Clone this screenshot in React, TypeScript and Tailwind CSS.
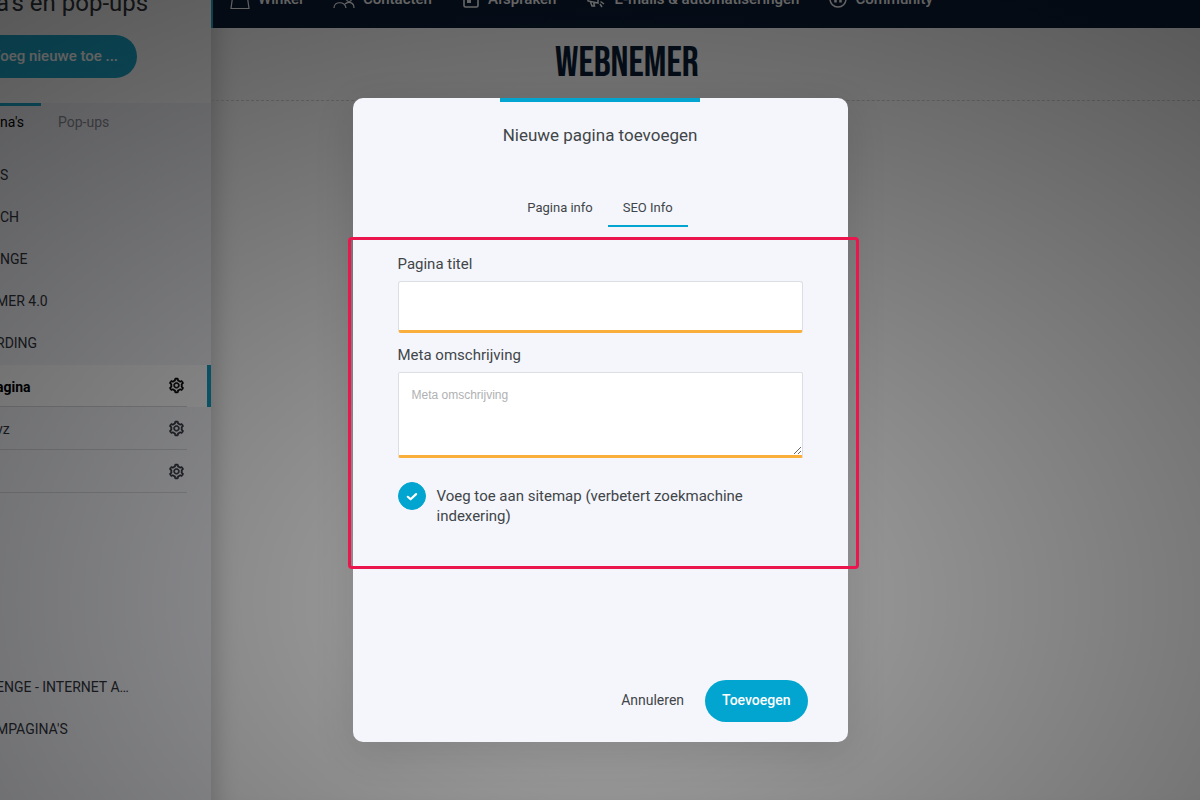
import React, { useState } from "react";
import { AiOutlineSetting } from "react-icons/ai";

const TABS = {
  INFO: "info",
  SEO: "seo",
};

const menuItems = ["S", "CH", "NGE"];

const courseItems = ["MER 4.0", "RDING"];

const pages = [
  { name: "agina", active: true },
  { name: "vz", active: false },
  { name: "", active: false },
];

const groups = ["ENGE - INTERNET A…", "MPAGINA'S"];

const BagIcon = () => (
  <svg width="20" height="22" viewBox="0 0 20 22" fill="none" stroke="currentColor" strokeWidth="1.2">
    <path d="M3 6h14l2 14.500H1L3 6Z" />
    <path d="M6.500 12V5a3.500 3.500 0 0 1 7 0v7" />
  </svg>
);

const ContactsIcon = () => (
  <svg width="22" height="22" viewBox="0 0 22 22" fill="none" stroke="currentColor" strokeWidth="1.2">
    <circle cx="7" cy="8" r="3" />
    <circle cx="16" cy="11" r="2.500" />
    <path d="M1 20c0-7 11-7 12 0M12 16c3-3 9-2 9 4" />
  </svg>
);

const CalendarIcon = () => (
  <svg width="18" height="22" viewBox="0 0 18 22" fill="none" stroke="currentColor" strokeWidth="1.6">
    <rect x="2" y="4" width="14" height="15" rx="1.500" />
    <path d="M5 13.500h4" strokeWidth="3" />
    <path d="M2 8h14" />
  </svg>
);

const MegaphoneIcon = () => (
  <svg width="20" height="22" viewBox="0 0 20 22" fill="none" stroke="currentColor" strokeWidth="1.5">
    <path d="M2 10l10-6v11L2 13zM4.500 14l1.500 4h2.500l-1-4M14 16l2 3M14.500 13.500l3.500 2.500" />
  </svg>
);

const CommunityIcon = () => (
  <svg width="18" height="22" viewBox="0 0 18 22" fill="none" stroke="currentColor" strokeWidth="1.5">
    <circle cx="9" cy="11" r="8" />
    <path d="M6.500 10.500v4M11.500 10.500v4" strokeWidth="2.500" />
  </svg>
);

const navItems = [
  { label: "Winkel", icon: <BagIcon /> },
  { label: "Contacten", icon: <ContactsIcon /> },
  { label: "Afspraken", icon: <CalendarIcon /> },
  { label: "E-mails & automatiseringen", icon: <MegaphoneIcon /> },
  { label: "Community", icon: <CommunityIcon /> },
];

function MenuList({ items, className }: { items: string[]; className?: string }) {
  return (
    <ul className={className}>
      {items.map((item) => (
        <li key={item} className="h-[42px] leading-[42px] whitespace-nowrap">
          {item}
        </li>
      ))}
    </ul>
  );
}

function Sidebar() {
  return (
    <aside className="flex w-[211px] shrink-0 flex-col overflow-hidden bg-[#f4f5fa] text-sm text-[#30343a]">
      <div className="h-[103px] bg-white">
        <h1 className="-mt-3 -ml-1 text-2xl leading-[30px] whitespace-nowrap">a's en pop-ups</h1>
        <button className="mt-[17px] -ml-5 h-[43px] w-[157px] rounded-full bg-[#1ba6ca] pr-[19px] text-right text-[15px] font-medium whitespace-nowrap text-white">
          Voeg nieuwe toe ...
        </button>
      </div>
      <div className="flex items-start">
        <button className="w-[41px] border-t-3 border-[#1ba6ca] pt-1 text-left leading-6 text-black">na's</button>
        <button className="px-[17px] pt-[7px] leading-6 text-[#8b8d96]">Pop-ups</button>
      </div>
      <MenuList items={menuItems} className="mt-5" />
      <MenuList items={courseItems} className="-ml-1" />
      <ul className="mt-px">
        {pages.map((page, i) => (
          <li key={i} className={page.active ? "border-r-4 border-[#12a0c2] bg-white font-bold text-black" : ""}>
            <div
              className={
                "flex items-center justify-between border-b border-[#d5d6da] pr-0.5 " +
                (page.active ? "mr-5 h-[42px]" : "mr-6 h-[43px]")
              }
            >
              <span className="-ml-1 pt-0.5">{page.name}</span>
              <button aria-label="Instellingen">
                <AiOutlineSetting size={17} strokeWidth={36} />
              </button>
            </div>
          </li>
        ))}
      </ul>
      <MenuList items={groups} className="mt-[173px] -ml-1" />
    </aside>
  );
}

export default function App() {
  const [tab, setTab] = useState(TABS.SEO);
  const [title, setTitle] = useState("");
  const [description, setDescription] = useState("");
  const [sitemap, setSitemap] = useState(true);

  return (
    <div className="relative flex h-screen overflow-hidden bg-white font-[Roboto,sans-serif]">
      <Sidebar />
      <main className="min-w-0 flex-1 shadow-[inset_24px_0_24px_-20px_rgba(0,0,0,0.2)]">
        <header className="h-7 overflow-hidden border-l-2 border-[#1ba6ca] bg-[#0a1c35]">
          <nav className="-mt-3 flex items-center gap-[30px] pl-[17px] text-[15px] font-medium whitespace-nowrap text-white">
            {navItems.map((item) => (
              <a key={item.label} href="#" className="flex items-center gap-2">
                {item.icon}
                {item.label}
              </a>
            ))}
          </nav>
        </header>
        <div className="flex h-[73px] items-center border-b border-dashed border-[#d5d5d5] pb-0.5 pl-[344px] font-['Bebas_Neue','Roboto_Condensed','Liberation_Sans_Narrow',sans-serif] text-[42px] text-[#0a1c35]">
          WEBNEMER
        </div>
      </main>

      <div className="absolute inset-0 flex items-start justify-center bg-[radial-gradient(ellipse_100%_105%_at_50%_75%,rgba(0,0,0,0.34),rgba(0,0,0,0.7))] pt-[98px]">
        <div
          role="dialog"
          aria-labelledby="dialog-title"
          className="flex min-h-[644px] w-[495px] max-w-full flex-col rounded-[10px] bg-[#f4f6fb] text-[#414549] shadow-[0_10px_40px_rgba(0,0,0,0.12)]"
        >
          <div className="mx-auto h-1 w-[200px] bg-[#02a5d0]" />
          <h2 id="dialog-title" className="mt-5 text-center text-[17px] leading-[26px]">
            Nieuwe pagina toevoegen
          </h2>
          <div className="mt-10 flex justify-center text-[13px]">
            <button
              onClick={() => setTab(TABS.INFO)}
              className={
                "h-[39px] border-b-2 px-[15px] pt-0.5 " + (tab === TABS.INFO ? "border-[#02a5d0]" : "border-transparent")
              }
            >
              Pagina info
            </button>
            <button
              onClick={() => setTab(TABS.SEO)}
              className={
                "h-[39px] border-b-2 px-[15px] pt-0.5 " + (tab === TABS.SEO ? "border-[#02a5d0]" : "border-transparent")
              }
            >
              SEO Info
            </button>
          </div>

          <div className="mt-2.5 -mr-[11px] -ml-[5px] min-h-[332px] rounded border-3 border-[#ec164e] pt-3.5 pr-[53px] pl-[47px] text-[15px] leading-5">
            <label htmlFor="title" className="block">
              Pagina titel
            </label>
            <input
              id="title"
              type="text"
              value={title}
              onChange={(e) => setTitle(e.target.value)}
              className="mt-[7px] block h-[52px] w-full rounded-[3px] border border-b-3 border-[#dcdfe2] border-b-[#faaf3c] bg-white px-[13px] text-xs outline-none"
            />
            <label htmlFor="description" className="mt-3 block">
              Meta omschrijving
            </label>
            <textarea
              id="description"
              placeholder="Meta omschrijving"
              value={description}
              onChange={(e) => setDescription(e.target.value)}
              className="mt-[7px] block h-[86px] w-full resize rounded-[2px] border border-b-3 border-[#dcdfe2] border-b-[#faaf3c] bg-white px-[13px] py-3 font-['Liberation_Sans',sans-serif] text-xs leading-5 outline-none placeholder:text-[#b0b1b3]"
            />
            <label className="mt-6 flex items-start gap-[11px]">
              <span className="relative flex size-7 shrink-0">
                <input
                  type="checkbox"
                  checked={sitemap}
                  onChange={(e) => setSitemap(e.target.checked)}
                  className="size-7 appearance-none rounded-full border border-[#02a5d0] bg-white checked:bg-[#02a5d0]"
                />
                <svg
                  className="pointer-events-none absolute inset-0"
                  width="28"
                  height="28"
                  viewBox="0 0 28 28"
                  fill="none"
                  stroke="#fff"
                  strokeWidth="2.2"
                  strokeLinecap="round"
                  strokeLinejoin="round"
                >
                  <path d="M9.800 14.800l2.800 2.500 5.500-5.200" />
                </svg>
              </span>
              <span className="pt-1">Voeg toe aan sitemap (verbetert zoekmachine indexering)</span>
            </label>
          </div>

          <div className="mt-auto flex justify-end gap-1 pr-10 pb-5 text-sm">
            <button className="h-[42px] px-[17px] pb-0.5">Annuleren</button>
            <button className="h-[42px] rounded-full bg-[#02a5d0] px-[17px] pb-0.5 font-medium text-white">
              Toevoegen
            </button>
          </div>
        </div>
      </div>
    </div>
  );
}
